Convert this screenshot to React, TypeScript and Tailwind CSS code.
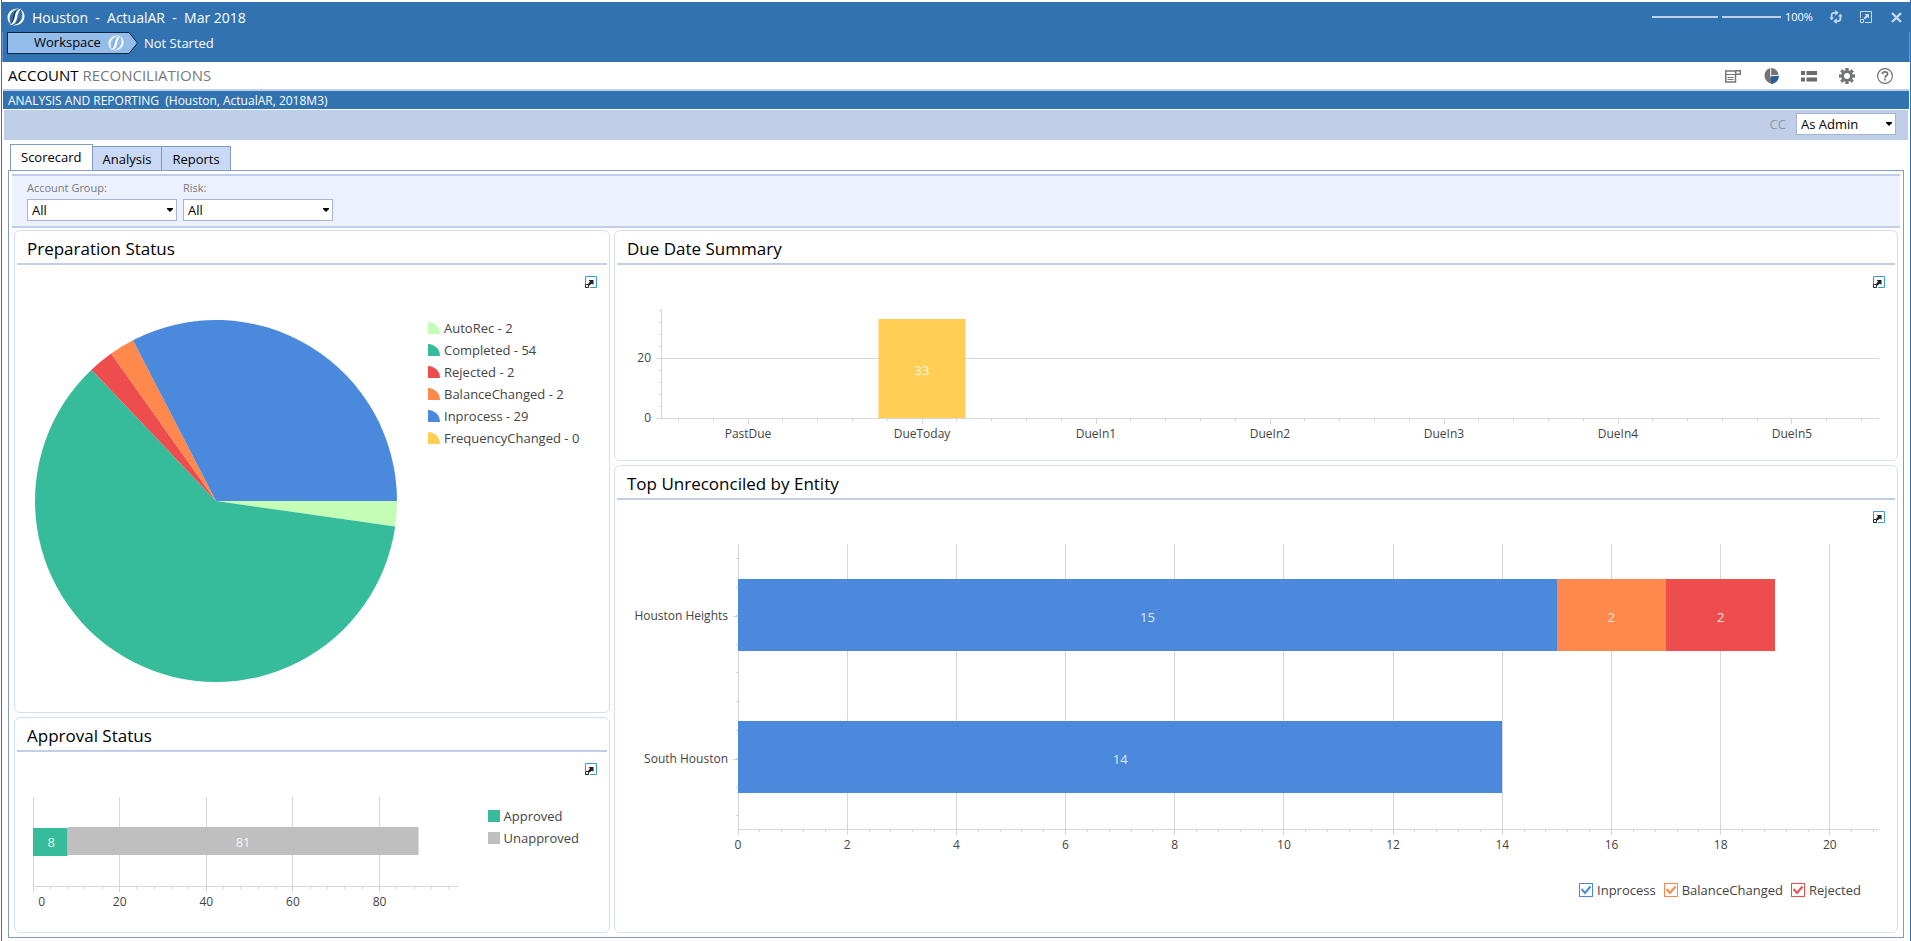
import { useState } from "react";
import type { ReactNode } from "react";

const COLORS = {
  auto: "#c4fdb5",
  green: "#37bc9b",
  red: "#ed4e4d",
  orange: "#ff894c",
  blue: "#4b89dc",
  yellow: "#ffce54",
  gray: "#bfbfbf",
  axis: "#d6d6d6",
};

const pieData = [
  { name: "AutoRec", value: 2, color: COLORS.auto },
  { name: "Completed", value: 54, color: COLORS.green },
  { name: "Rejected", value: 2, color: COLORS.red },
  { name: "BalanceChanged", value: 2, color: COLORS.orange },
  { name: "Inprocess", value: 29, color: COLORS.blue },
  { name: "FrequencyChanged", value: 0, color: COLORS.yellow },
];

const dueData = [
  { name: "PastDue", value: 0 },
  { name: "DueToday", value: 33 },
  { name: "DueIn1", value: 0 },
  { name: "DueIn2", value: 0 },
  { name: "DueIn3", value: 0 },
  { name: "DueIn4", value: 0 },
  { name: "DueIn5", value: 0 },
];

const entityData = [
  {
    name: "Houston Heights",
    parts: [
      { value: 15, color: COLORS.blue },
      { value: 2, color: COLORS.orange },
      { value: 2, color: COLORS.red },
    ],
  },
  { name: "South Houston", parts: [{ value: 14, color: COLORS.blue }] },
];

function range(count: number) {
  return Array.from({ length: count }, (_, i) => i);
}

function Logo({ shade }: { shade: string }) {
  return (
    <svg width="18" height="18" viewBox="0 0 18 18" aria-hidden="true">
      <path d="M12 1.6C8 2.4 6.6 5.6 5.9 9C5.2 12.4 4.6 14.6 3.4 15.8C6 15.2 7.2 12.4 8 8.8C8.8 5.2 9.8 2.8 13 1.4Z" fill={shade} />
      <path d="M12 10C11.2 13 10 15.6 7.6 17C10 16.6 11.8 14.8 12.6 12Z" fill={shade} />
      <g fill="#fff">
        <path d="M12.4 0.5C5.4 -0.2 0.4 4.4 0.5 9.6C0.6 12.8 2 15.2 4.2 16.2C2.8 13.8 2.3 11.6 2.7 9.2C3.3 5.2 6.4 1.8 12.4 0.5Z" />
        <path d="M5.6 17.5C12.6 18.2 17.6 13.6 17.5 8.4C17.4 5.2 16 2.8 13.8 1.8C15.2 4.2 15.7 6.4 15.3 8.8C14.7 12.8 11.6 16.2 5.6 17.5Z" />
        <path d="M14.6 0.6C9.4 1.4 8.6 5 7.8 8.6C7 12.6 5.8 15.6 2.4 17.2C7.8 17 9.4 13.6 10.2 9.6C11 5.8 11.6 2.8 14.6 0.6Z" />
      </g>
    </svg>
  );
}

function ExpandIcon() {
  return (
    <svg width="12" height="12" viewBox="0 0 12 12" aria-hidden="true">
      <path d="M0.5 8V0.5H11.5V11.5H5" fill="none" stroke="#3c9ad6" />
      <path d="M0.5 8.5H3.5V11.5H0.5Z" fill="#fff" stroke="#222" />
      <path d="M3.5 4H8.5V9L7 7.5L4.5 9.5L3 8L5 5.5Z" fill="#222" />
    </svg>
  );
}

function Dropdown({ id, value, className }: { id: string; value: string; className: string }) {
  return (
    <div className={`relative h-[22px] ${className}`}>
      <select
        id={id}
        className="block h-full w-full appearance-none border border-[#a3b5dc] bg-white pl-1 text-[13px] leading-5 text-black outline-none"
      >
        <option>{value}</option>
      </select>
      <svg width="6" height="4" viewBox="0 0 6 4" className="pointer-events-none absolute top-[9px] right-1" aria-hidden="true">
        <path d="M0 0H6V1L3 4L0 1Z" fill="#000" />
      </svg>
    </div>
  );
}

function Card({ title, className, children }: { title: string; className?: string; children: ReactNode }) {
  return (
    <section className={`flex flex-col rounded-md border border-[#d3dff5] bg-white ${className ?? ""}`}>
      <h2 className="mx-0.5 flex h-[34px] shrink-0 items-center border-b-2 border-[#c0cee8] pt-1 pl-2.5 text-[17px] text-black">
        {title}
      </h2>
      <div className="flex justify-end pt-[11px] pr-3">
        <button type="button" aria-label={`Expand ${title}`} className="block">
          <ExpandIcon />
        </button>
      </div>
      {children}
    </section>
  );
}

function PieChart() {
  const total = pieData.reduce((sum, d) => sum + d.value, 0);
  const r = 181;
  const point = (n: number) => {
    const angle = (n / total) * Math.PI * 2;
    return `${r + r * Math.cos(angle)} ${r + r * Math.sin(angle)}`;
  };
  let start = 0;
  return (
    <svg viewBox="0 0 362 362" className="mt-[3px] w-[362px] shrink" role="img" aria-label="Preparation status">
      {pieData
        .filter((d) => d.value > 0)
        .map((d) => {
          const from = start;
          start += d.value;
          const large = d.value / total > 0.5 ? 1 : 0;
          return (
            <path key={d.name} d={`M${r} ${r}L${point(from)}A${r} ${r} 0 ${large} 1 ${point(start)}Z`} fill={d.color} />
          );
        })}
    </svg>
  );
}

function ApprovalChart() {
  const max = 98;
  const x = (n: number) => `${(n / max) * 100}%`;
  return (
    <svg className="block h-[120px] w-full overflow-visible text-[12px]" role="img" aria-label="Approval status">
      <g stroke={COLORS.axis} shapeRendering="crispEdges">
        {range(5).map((i) => (
          <line key={i} x1={x(i * 20)} x2={x(i * 20)} y1="0" y2="95" />
        ))}
        {range(25).map((i) => (
          <line key={i} x1={x(i * 4)} x2={x(i * 4)} y1="89" y2="92" />
        ))}
        <line x1="0" x2="100%" y1="89" y2="89" />
      </g>
      <rect x="0" y="31" width={x(8)} height="28" fill={COLORS.green} />
      <rect x={x(8)} y="30" width={x(81)} height="28" fill={COLORS.gray} />
      <g fill="#fff" fillOpacity="0.85" textAnchor="middle" fontSize="13">
        <text x={x(4.2)} y="50">8</text>
        <text x={x(48.5)} y="50">81</text>
      </g>
      <g fill="#444" textAnchor="middle">
        <text x={x(2)} y="109">0</text>
        {[20, 40, 60, 80].map((n) => (
          <text key={n} x={x(n)} y="109">
            {n}
          </text>
        ))}
      </g>
    </svg>
  );
}

function DueChart() {
  const step = 100 / dueData.length;
  const base = 109;
  return (
    <svg className="block h-[140px] w-full overflow-visible text-[12px]" role="img" aria-label="Due date summary">
      <g stroke={COLORS.axis} shapeRendering="crispEdges">
        <line x1="0" x2="0" y1="0" y2={base} />
        <line x1="-5" x2="100%" y1="49" y2="49" />
        <line x1="-5" x2="100%" y1={base} y2={base} />
        {range(10).map((i) => (
          <line key={i} x1="-2" x2="0" y1={base - i * 12} y2={base - i * 12} />
        ))}
        {range(35).map((i) => (
          <line key={i} x1={`${(i + 0.5) * (step / 5)}%`} x2={`${(i + 0.5) * (step / 5)}%`} y1={base} y2={base + 3} />
        ))}
        {dueData.map((d, i) => (
          <line key={d.name} x1={`${(i + 0.5) * step}%`} x2={`${(i + 0.5) * step}%`} y1={base} y2={base + 6} />
        ))}
      </g>
      <g fill="#444" textAnchor="end">
        <text x="-10" y="53">20</text>
        <text x="-10" y="113">0</text>
      </g>
      {dueData.map((d, i) => (
        <g key={d.name} textAnchor="middle">
          {d.value > 0 && (
            <>
              <rect
                x={`${(i + 0.25) * step}%`}
                y={base - d.value * 3}
                width={`${step / 2}%`}
                height={d.value * 3}
                fill={COLORS.yellow}
              />
              <text x={`${(i + 0.5) * step}%`} y={base - d.value * 1.5 + 6} fill="#fff" fillOpacity="0.85" fontSize="13">
                {d.value}
              </text>
            </>
          )}
          <text x={`${(i + 0.5) * step}%`} y="129" fill="#444">
            {d.name}
          </text>
        </g>
      ))}
    </svg>
  );
}

function EntityChart() {
  const max = 20.9;
  const x = (n: number) => `${(n / max) * 100}%`;
  const base = 285;
  const rowHeight = 143;
  return (
    <svg className="block h-[310px] w-full overflow-visible text-[12px]" role="img" aria-label="Top unreconciled by entity">
      <g stroke={COLORS.axis} shapeRendering="crispEdges">
        {range(11).map((i) => (
          <line key={i} x1={x(i * 2)} x2={x(i * 2)} y1="0" y2={base + 6} />
        ))}
        {range(53).map((i) => (
          <line key={i} x1={x(i * 0.4)} x2={x(i * 0.4)} y1={base} y2={base + 3} />
        ))}
        {range(10).map((i) => (
          <line key={i} x1="-2" x2="0" y1={14.5 + i * 28.6} y2={14.5 + i * 28.6} />
        ))}
        <line x1="0" x2="100%" y1={base} y2={base} />
      </g>
      {entityData.map((row, i) => {
        const top = 35 + i * (rowHeight - 1);
        let start = 0;
        return (
          <g key={row.name}>
            <line x1="-5" x2="0" y1={72 + i * rowHeight} y2={72 + i * rowHeight} stroke={COLORS.axis} shapeRendering="crispEdges" />
            <text x="-10" y={76 + i * rowHeight} fill="#444" textAnchor="end">
              {row.name}
            </text>
            {row.parts.map((p) => {
              const from = start;
              start += p.value;
              return (
                <g key={p.color}>
                  <rect x={x(from)} y={top} width={x(p.value)} height="72" fill={p.color} shapeRendering="crispEdges" />
                  <text x={x(from + p.value / 2)} y={top + 43} fill="#fff" fillOpacity="0.85" textAnchor="middle" fontSize="13">
                    {p.value}
                  </text>
                </g>
              );
            })}
          </g>
        );
      })}
      <g fill="#444" textAnchor="middle">
        {range(11).map((i) => (
          <text key={i} x={x(i * 2)} y="305">
            {i * 2}
          </text>
        ))}
      </g>
    </svg>
  );
}

function SeriesCheck({ label, color, border }: { label: string; color: string; border: string }) {
  const [on, setOn] = useState(true);
  return (
    <label className="flex items-center gap-1 text-[13px] leading-5 text-[#444]">
      <span className="relative block size-3.5">
        <input
          type="checkbox"
          checked={on}
          onChange={() => setOn(!on)}
          className={`block size-3.5 appearance-none border bg-white ${border}`}
        />
        {on && (
          <svg width="14" height="14" viewBox="0 0 14 14" className="pointer-events-none absolute inset-0" aria-hidden="true">
            <path d="M2.5 6L6 10L11.5 3.5" fill="none" stroke={color} strokeWidth="2" />
          </svg>
        )}
      </span>
      {label}
    </label>
  );
}

function TopBar() {
  return (
    <header className="bg-[#3172b0] text-white">
      <div className="flex h-[30px] items-center justify-between pr-2 pl-[5px]">
        <div className="flex items-center gap-[7px]">
          <Logo shade="#2b3946" />
          <span className="text-[14px] whitespace-pre">{"Houston  -  ActualAR  -  Mar 2018"}</span>
        </div>
        <div className="flex items-center">
          <input
            type="range"
            aria-label="Zoom"
            min={0}
            max={190}
            defaultValue={100}
            className="h-0.5 w-[129px] appearance-none bg-[#c0cee8] [&::-webkit-slider-thumb]:h-0.5 [&::-webkit-slider-thumb]:w-1 [&::-webkit-slider-thumb]:appearance-none [&::-webkit-slider-thumb]:bg-[#3172b0]"
          />
          <span className="ml-1 w-[44px] text-[11px]">100%</span>
          <button type="button" aria-label="Refresh" className="mr-[17px]">
            <svg width="14" height="14" viewBox="0 0 14 14" fill="none" stroke="#c5d9f2" strokeWidth="1.8" aria-hidden="true">
              <path d="M2.6 9.2V5.4C2.6 3.6 3.6 2.8 5 2.8H7" />
              <path d="M11.4 4.8V8.6C11.4 10.4 10.4 11.2 9 11.2H7" />
              <path d="M6.2 0L9.8 2.8L6.2 5.8ZM7.8 8.2L4.2 11.2L7.8 14Z" fill="#c5d9f2" stroke="none" />
              <path d="M0.4 7.4L2.6 10.2L5 7.4ZM9 6.6L11.4 3.8L13.6 6.6Z" fill="#c5d9f2" stroke="none" />
            </svg>
          </button>
          <button type="button" aria-label="Open in window" className="mr-[19px]">
            <svg width="12" height="12" viewBox="0 0 12 12" aria-hidden="true">
              <path d="M0.5 7V0.5H11.5V11.5H5" fill="none" stroke="#c5d9f2" />
              <path d="M0.5 8.5H3.5V11.5H0.5Z" fill="none" stroke="#c5d9f2" />
              <path d="M4.5 3H9V7.5L7.5 6L5 8.5L3.5 7L6 4.5Z" fill="#c5d9f2" />
            </svg>
          </button>
          <button type="button" aria-label="Close">
            <svg width="11" height="11" viewBox="0 0 11 11" aria-hidden="true">
              <path d="M1 1L10 10M10 1L1 10" stroke="#c5d9f2" strokeWidth="2.4" />
            </svg>
          </button>
        </div>
      </div>
      <div className="flex h-[30px] items-start gap-1.5 border-x border-[#6a94cf] pl-1 text-[13px]">
        <button type="button" className="relative flex h-[22px] w-[131px] items-center text-black">
          <svg width="131" height="22" viewBox="0 0 131 22" className="absolute inset-0" aria-hidden="true">
            <path d="M0.5 0.5H122L130.5 11L122 21.5H0.5Z" fill="#95bdeb" stroke="#10233f" />
          </svg>
          <span className="relative flex w-full items-center justify-between pr-3.5 pl-[27px]">
            Workspace
            <span className="block size-4 [&>svg]:size-4">
              <Logo shade="#7fa9dc" />
            </span>
          </span>
        </button>
        <span className="leading-[22px]">Not Started</span>
      </div>
    </header>
  );
}

function TitleIcons() {
  return (
    <div className="flex items-center gap-[22px] pr-4">
      <button type="button" aria-label="Form">
        <svg width="16" height="16" viewBox="0 0 16 16" fill="none" stroke="#777" aria-hidden="true">
          <path d="M10 3H0.75V14H10.5V7" strokeWidth="1.5" />
          <path d="M0 6.5H10M2.5 9.5H8.5M2.5 11.5H8.5" />
          <rect x="10.75" y="2.75" width="4.5" height="3.5" strokeWidth="1.5" />
        </svg>
      </button>
      <button type="button" aria-label="Scorecard">
        <svg width="16" height="16" viewBox="0 0 16 16" aria-hidden="true">
          <path d="M7.2 0V8L10.5 15.6A8 8 0 0 1 7.2 0Z" fill="#737477" />
          <path d="M8.2 0A8 8 0 0 1 15.6 6.8L8.2 7.2Z" fill="#737477" />
          <path d="M8 8.2L16 7.8A8 8 0 0 1 8 16Z" fill="#2a5ba3" />
        </svg>
      </button>
      <button type="button" aria-label="List">
        <svg width="16" height="16" viewBox="0 0 16 16" fill="#6b6b6b" aria-hidden="true">
          <path d="M0 3H4V7H0ZM5.5 3H16V7H5.5ZM0 9.5H4V13.5H0ZM5.5 9.5H16V13.5H5.5Z" />
        </svg>
      </button>
      <button type="button" aria-label="Settings">
        <svg width="16" height="16" viewBox="0 0 16 16" fill="#737477" aria-hidden="true">
          {range(8).map((i) => (
            <path key={i} d="M6.2 0H9.8L9.3 3.5H6.7Z" transform={`rotate(${i * 45} 8 8)`} />
          ))}
          <path fillRule="evenodd" d="M8 2A6 6 0 1 0 8 14A6 6 0 1 0 8 2ZM8 5A3 3 0 1 1 8 11A3 3 0 1 1 8 5Z" />
        </svg>
      </button>
      <button type="button" aria-label="Help">
        <svg width="16" height="16" viewBox="0 0 16 16" fill="none" stroke="#737477" aria-hidden="true">
          <circle cx="8" cy="8" r="7.4" strokeWidth="1.2" />
          <path d="M5.4 6.2C5.4 4.6 6.5 3.8 8 3.8C9.6 3.8 10.6 4.7 10.6 6C10.6 7.7 8 7.8 8 9.8" strokeWidth="1.8" />
          <path d="M8 10.8V12.6" strokeWidth="1.8" />
        </svg>
      </button>
    </div>
  );
}

export default function App() {
  const [tab, setTab] = useState("Scorecard");
  return (
    <div className="ml-px flex min-h-screen flex-col border-x border-[#3172b0] bg-white pt-0.5 font-['Open_Sans','Noto_Sans',sans-serif]">
      <TopBar />
      <div className="mx-px flex h-[29px] items-center justify-between border-b-2 border-[#c0cee8] pl-[5px]">
        <h1 className="text-[15px] text-black">
          ACCOUNT <span className="text-[#76797f]">RECONCILIATIONS</span>
        </h1>
        <TitleIcons />
      </div>
      <div className="mx-px h-[18px] bg-[#3172b0] pl-[5px] text-[12px] leading-5 whitespace-pre text-white">
        {"ANALYSIS AND REPORTING  (Houston, ActualAR, 2018M3)"}
      </div>
      <div className="mx-0.5 mt-px flex h-[30px] items-start justify-end gap-2.5 bg-[#c0cee8] pt-[3px] pr-3">
        <label htmlFor="role" className="text-[13px] leading-[22px] text-[#8f99ae]">
          CC
        </label>
        <Dropdown id="role" value="As Admin" className="w-[100px]" />
      </div>

      <div role="tablist" className="mt-1 flex h-[26px] items-end pl-2 text-[13px]">
        {["Scorecard", "Analysis", "Reports"].map((name) => (
          <button
            key={name}
            type="button"
            role="tab"
            aria-selected={tab === name}
            onClick={() => setTab(name)}
            className={
              tab === name
                ? "-mb-px h-[27px] border border-b-0 border-[#7f9dc4] bg-white px-2.5 text-black"
                : "h-6 border border-b-0 border-l-0 border-[#7f9dc4] bg-[#c9d8f3] px-2.5 pt-0.5 text-black"
            }
          >
            {name}
          </button>
        ))}
      </div>

      <main className="mr-1.5 mb-[3px] ml-1.5 flex flex-1 flex-col border border-[#829dc0] pt-[3px]">
        <div className="mx-[3px] flex h-[54px] gap-1.5 border-y-2 border-[#c0cee8] bg-[#edf1fe] pt-1 pl-[15px]">
          <div className="w-[150px]">
            <label htmlFor="group" className="block h-[19px] text-[11px] leading-4 text-[#76797f]">
              Account Group:
            </label>
            <Dropdown id="group" value="All" className="w-full" />
          </div>
          <div className="w-[150px]">
            <label htmlFor="risk" className="block h-[19px] text-[11px] leading-4 text-[#76797f]">
              Risk:
            </label>
            <Dropdown id="risk" value="All" className="w-full" />
          </div>
        </div>

        <div className="grid flex-1 grid-cols-[596fr_1284fr] gap-1 px-[5px] pt-0.5 pb-1">
          <div className="flex flex-col gap-1">
            <Card title="Preparation Status" className="flex-1">
              <div className="mt-[29px] flex items-start gap-[31px] pl-5">
                <PieChart />
                <ul className="shrink-0 text-[13px] leading-[22px] text-[#444]">
                  {pieData.map((d) => (
                    <li key={d.name} className="flex items-center gap-1">
                      <svg width="12" height="12" viewBox="0 0 12 12" aria-hidden="true">
                        <path d="M0 0C7 0.5 12 5 12 12H0Z" fill={d.color} />
                      </svg>
                      {d.name} - {d.value}
                    </li>
                  ))}
                </ul>
              </div>
            </Card>
            <Card title="Approval Status">
              <div className="mt-[22px] flex h-[135px] items-start gap-[30px] pr-[30px] pl-[18px]">
                <ApprovalChart />
                <ul className="mt-2 shrink-0 text-[13px] leading-[22px] text-[#444]">
                  <li className="flex items-center gap-1">
                    <span className="size-3 bg-[#37bc9b]" />
                    Approved
                  </li>
                  <li className="flex items-center gap-1">
                    <span className="size-3 bg-[#bfbfbf]" />
                    Unapproved
                  </li>
                </ul>
              </div>
            </Card>
          </div>

          <div className="flex flex-col gap-1">
            <Card title="Due Date Summary">
              <div className="mt-[21px] h-[151px] pr-[18px] pl-[46px]">
                <DueChart />
              </div>
            </Card>
            <Card title="Top Unreconciled by Entity" className="flex-1">
              <div className="mt-[21px] pr-[18px] pl-[123px]">
                <EntityChart />
              </div>
              <div className="mt-[26px] flex justify-end gap-2 pr-9">
                <SeriesCheck label="Inprocess" color={COLORS.blue} border="border-[#4b89dc]" />
                <SeriesCheck label="BalanceChanged" color={COLORS.orange} border="border-[#ff894c]" />
                <SeriesCheck label="Rejected" color={COLORS.red} border="border-[#ed4e4d]" />
              </div>
            </Card>
          </div>
        </div>
      </main>
    </div>
  );
}
